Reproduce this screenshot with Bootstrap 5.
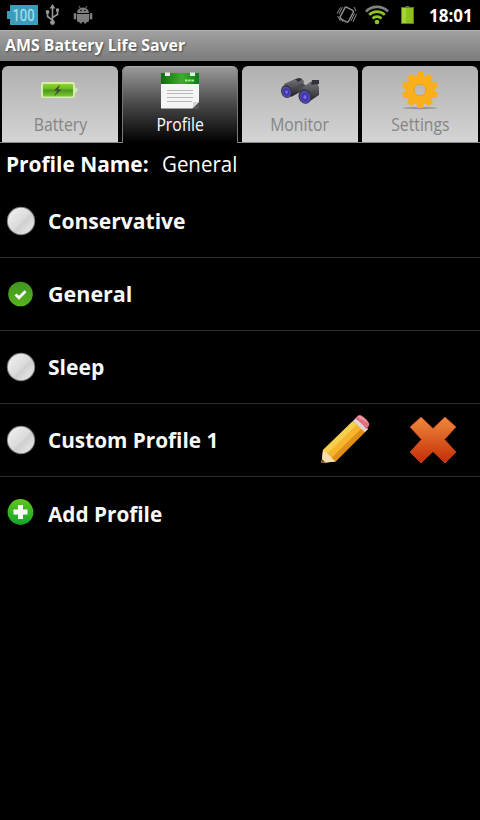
<!DOCTYPE html>
<html lang="en">
<head>
<meta charset="utf-8">
<meta name="viewport" content="width=device-width, initial-scale=1">
<title>AMS Battery Life Saver</title>
<link href="https://cdn.jsdelivr.net/npm/bootstrap@5.3.0/dist/css/bootstrap.min.css" rel="stylesheet">
<style>
body{background:#000;color:#fff;font-family:"Open Sans","Noto Sans",sans-serif;width:480px;height:820px;overflow:hidden}
svg{display:block;flex:none}
.statusbar{height:30px;padding:0 8px 0 7px}
.wifi{margin-left:7px}
.batt{margin-left:12px}
.clock{font-size:17px;font-weight:700;line-height:30px;padding-top:2px;width:43px;margin-left:15px}
.titlebar{height:31px;background:linear-gradient(#a0a0a0,#7c7c7c);border-top:1px solid #b0b0b0;padding-left:5px;font-size:15.9px;font-weight:700;line-height:29px;text-shadow:1px 1px 2px #444}
.fit{display:inline-block;white-space:nowrap;transform-origin:0 50%}
.tabstrip{height:82px;padding:5px 2px 0;gap:4px;background:linear-gradient(#8a8a8a,#8a8a8a) 0 100%/100% 1px no-repeat #000}
.tabstrip .tab{flex:1 1 0;height:76px;border-radius:6px 6px 0 0;background:linear-gradient(#b0b0b0,#d4d4d4);color:#858585;border:0;padding:0}
.tabstrip .tab.current{height:77px;background:linear-gradient(#9c9c9c,#484848 50%,#000);color:#fff;box-shadow:inset 1px 0 #777,inset -1px 0 #777,inset 0 1px #aaa}
.tab svg{margin-top:4px}
.tab-label{font-size:18px;line-height:24px;margin-top:2px}
.tab-label .fit{transform-origin:50% 50%;transform:scaleX(.875)}
.heading{height:42px;padding:0 0 0 6px;font-size:22px;line-height:41px}
.heading-key{width:156px}
.heading-key .fit{transform:scaleX(.95)}
.heading-value .fit{transform:scaleX(.93)}
.profiles .entry{height:73px;border-bottom:1px solid #2b2b2b;padding-left:6px}
.profiles .entry:last-child{border:0}
.entry-name{font-size:21.5px;font-weight:700;margin-left:12px;line-height:72px;color:#f8f8f8}
.tight{transform:scaleX(.965)}
.snug{transform:scaleX(.98)}
.actions{gap:39px;margin-right:23px}
</style>
<script src="https://cdn.jsdelivr.net/npm/bootstrap@5.3.0/dist/js/bootstrap.bundle.min.js"></script>
</head>
<body>
<svg width="0" height="0" class="position-absolute">
  <defs>
    <linearGradient id="orb" x1="0" y1="0" x2="1" y2="1"><stop offset="0" stop-color="#f2f2f2"/><stop offset=".5" stop-color="#dcdcdc"/><stop offset=".58" stop-color="#cfcfcf"/><stop offset="1" stop-color="#efefef"/></linearGradient>
    <linearGradient id="green" x1="0" y1="0" x2="0" y2="1"><stop offset="0" stop-color="#3f9420"/><stop offset="1" stop-color="#58b41c"/></linearGradient>
    <linearGradient id="plusg" x1="0" y1="0" x2="0" y2="1"><stop offset="0" stop-color="#5fc61c"/><stop offset="1" stop-color="#12a52a"/></linearGradient>
    <linearGradient id="red" x1="0" y1="0" x2="0" y2="1"><stop offset="0" stop-color="#f08a3c"/><stop offset="1" stop-color="#c52c06"/></linearGradient>
    <linearGradient id="cell" x1="0" y1="0" x2="0" y2="1"><stop offset="0" stop-color="#8bd23c"/><stop offset=".35" stop-color="#6fbc2c"/><stop offset=".5" stop-color="#4c981a"/><stop offset="1" stop-color="#7cc836"/></linearGradient>
    <linearGradient id="head" x1="0" y1="0" x2="1" y2="0"><stop offset="0" stop-color="#126b12"/><stop offset=".55" stop-color="#3fae2c"/><stop offset="1" stop-color="#0e7a14"/></linearGradient>
    <linearGradient id="barrel" x1="0" y1="0" x2="0" y2="1"><stop offset="0" stop-color="#77777b"/><stop offset=".4" stop-color="#55555a"/><stop offset="1" stop-color="#1c1c20"/></linearGradient>
    <radialGradient id="lens"><stop offset="0" stop-color="#8f86e8"/><stop offset=".5" stop-color="#3d2fa8"/><stop offset="1" stop-color="#5b51bd"/></radialGradient>
    <symbol id="radio" viewBox="0 0 30 30"><circle cx="15" cy="15" r="14.200" fill="#777"/><circle cx="15" cy="15" r="13.200" fill="url(#orb)"/></symbol>
  </defs>
</svg>

<header class="statusbar d-flex align-items-center">
  <svg width="32" height="30"><path d="M3 5h28v20H3v-6H0v-8h3z" fill="#3b9cbb"/><text x="5.500" y="21" font-size="16" textLength="22" lengthAdjust="spacingAndGlyphs" fill="#a9dcec" stroke="#a9dcec" stroke-width=".3" font-family="Roboto,sans-serif">100</text></svg>
  <svg class="ms-1" width="20" height="30" fill="none" stroke="#969696" stroke-width="1.600"><path d="M9.500 7v15M9.500 20 4.500 16.500V12M9.500 17.500 14.500 14.500V10"/><path d="m9.500 4 3 4.500h-6zM13 8.500h3v3h-3z" fill="#969696" stroke="none"/><circle cx="4.500" cy="12" r="1.900" fill="#969696" stroke="none"/><circle cx="9.500" cy="22.500" r="2.400" fill="#969696" stroke="none"/></svg>
  <svg class="ms-2" width="24" height="30"><g fill="#7d7d7d"><path d="M6 13a6 5.500 0 0 1 12 0zM6 14h12v6.500a1.500 1.500 0 0 1-1.500 1.500h-9A1.500 1.500 0 0 1 6 20.500z"/><rect x="2.700" y="13" width="2.600" height="6.500" rx="1.300"/><rect x="18.700" y="13" width="2.600" height="6.500" rx="1.300"/><rect x="8.500" y="20" width="2.600" height="3.500" rx="1"/><rect x="13" y="20" width="2.600" height="3.500" rx="1"/></g><path d="m8 6 1.500 2.500M16 6l-1.500 2.500" stroke="#7d7d7d"/><circle cx="10" cy="10.500" r=".8"/><circle cx="14" cy="10.500" r=".8"/></svg>
  <svg class="ms-auto" width="22" height="30" fill="none" stroke="#8c8c8c"><rect x="6" y="8" width="9.500" height="13" rx="1.500" stroke-width="1.500" transform="rotate(28 10.500 14.500)"/><path d="M4.500 7.500 1 13.500M6.500 7 3 14M1.500 16l3 5M4 16l3 6M20.500 14 17 22M18.500 13.500 15 21M18 7l2 4"/></svg>
  <svg class="wifi" width="24" height="30" fill="none" stroke-width="2.600"><path d="M1 11.500a15.500 15.500 0 0 1 22 0" stroke="#828282"/><path d="M4.200 14.900a11 11 0 0 1 15.600 0M7.500 18.500a6.300 6.300 0 0 1 9 0" stroke="#8fc41e"/><circle cx="12" cy="22" r="2.300" fill="#8fc41e"/></svg>
  <svg width="13" height="30" class="batt"><path d="M4.500 6h4v2h-4z" fill="#666"/><rect x=".5" y="7.500" width="12" height="16" fill="#8cc21a" stroke="#5e7d22"/><path d="M1 8h4v15H1z" fill="#a3d433"/></svg>
  <div class="clock text-end">18:01</div>
</header>

<div class="titlebar">AMS Battery Life Saver</div>

<nav class="tabstrip d-flex align-items-start">
  <button class="tab d-flex flex-column align-items-center">
    <svg width="40" height="40"><path d="M3 12h30q2 0 2 2v3l3.500 3-3.500 3v3q0 2-2 2H3q-2 0-2-2V14q0-2 2-2z" fill="#d4ecae"/><rect x="3" y="14" width="30" height="12.500" rx="1" fill="url(#cell)"/><path d="m20 14.500-6 6h3.500L14 26.500l7.500-7H18z" fill="#3b4a2c"/></svg>
    <div class="tab-label"><span class="fit">Battery</span></div>
  </button>
  <button class="tab current d-flex flex-column align-items-center">
    <svg width="40" height="40"><path d="M1 4h38v34.500H1z" fill="#f5f5f5"/><path d="M1 3h38v11H1z" fill="url(#head)"/><path d="M5 2.500h5v3.500H5zM30 2.500h5v3.500h-5z" fill="#e8eee4"/><path d="M25 10.500h9" stroke="#b5e59a" stroke-width="2" stroke-dasharray="2.500 .7"/><path d="M7 20.500h26M7 23.500h26M7 27.500h26M7 31.500h25" stroke="#b8b8b8"/><path d="M39 32v7h-7z" fill="#555"/><path d="M39 31q-4 2-6 1 1 3-1 6.500z" fill="#d0d0d0"/></svg>
    <div class="tab-label"><span class="fit">Profile</span></div>
  </button>
  <button class="tab d-flex flex-column align-items-center">
    <svg width="42" height="40"><path d="m5 14 11-5 6-1 3 3-2 10-11 6z" fill="url(#barrel)"/><path d="m18 16 5-3 5 3-2 6h-5z" fill="#4b4b50"/><path d="m23 18 8-6 8-1v4l1 2v8l-12 8z" fill="url(#barrel)"/><path d="m16 9 5-1 2 2-4 2zM33 10h7v4l-8 1z" fill="#333238"/><ellipse cx="7.500" cy="21.500" rx="5.300" ry="6.500" transform="rotate(-18 7.500 21.500)" fill="#36353e"/><ellipse cx="7.500" cy="22" rx="4.200" ry="5.400" transform="rotate(-18 7.500 22)" fill="url(#lens)"/><ellipse cx="26" cy="26.500" rx="6.400" ry="7.400" transform="rotate(-18 26 26.500)" fill="#36353e"/><ellipse cx="26" cy="27" rx="5.200" ry="6.200" transform="rotate(-18 26 27)" fill="url(#lens)"/></svg>
    <div class="tab-label"><span class="fit">Monitor</span></div>
  </button>
  <button class="tab d-flex flex-column align-items-center">
    <svg width="40" height="40"><ellipse cx="20" cy="38" rx="17" ry="1.200" fill="#969696"/><g transform="translate(20 20)"><circle r="10" fill="none" stroke="#fab01c" stroke-width="9"/><g fill="#faae1a"><path id="tt" d="M-4-12-2.800-18h5.600L4-12z"/><use href="#tt" transform="rotate(36)"/><use href="#tt" transform="rotate(72)"/><use href="#tt" transform="rotate(108)"/><use href="#tt" transform="rotate(144)"/><use href="#tt" transform="rotate(180)"/><use href="#tt" transform="rotate(216)"/><use href="#tt" transform="rotate(252)"/><use href="#tt" transform="rotate(288)"/><use href="#tt" transform="rotate(324)"/></g><circle r="5.800" fill="none" stroke="#e3a02a" stroke-width=".8"/></g></svg>
    <div class="tab-label"><span class="fit">Settings</span></div>
  </button>
</nav>

<main>
  <div class="heading d-flex"><div class="heading-key fw-bold"><span class="fit">Profile Name:</span></div><div class="heading-value"><span class="fit">General</span></div></div>
  <div class="profiles">
    <div class="entry d-flex align-items-center"><svg width="30" height="30"><use href="#radio"/></svg><span class="entry-name"><span class="fit snug">Conservative</span></span></div>
    <div class="entry d-flex align-items-center"><svg width="30" height="30"><circle cx="14.500" cy="15" r="12.300" fill="url(#green)"/><path d="m9.500 15.500 3.500 3.300 6.500-6.500" fill="none" stroke="#fff" stroke-width="2.700"/></svg><span class="entry-name"><span class="fit">General</span></span></div>
    <div class="entry d-flex align-items-center"><svg width="30" height="30"><use href="#radio"/></svg><span class="entry-name"><span class="fit snug">Sleep</span></span></div>
    <div class="entry d-flex align-items-center"><svg width="30" height="30"><use href="#radio"/></svg><span class="entry-name"><span class="fit tight">Custom Profile 1</span></span>
      <div class="actions d-flex ms-auto">
        <svg width="50" height="50"><path d="m1.500 48 1.500-13L36 3.500 48 14 15.500 46.500z" fill="#f5b52c"/><path d="M3 35 32.500 6.300l4 3.700L7 39z" fill="#f7cf4c"/><path d="M11.500 43 41 14l3.500 3.200-29 29.300z" fill="#e08f1a"/><path d="m1.500 48 1.500-13 4.500 3.500 4 4.300 4 3.700z" fill="#f7dfb0"/><path d="m1.500 48 .5-4 3.500 3.500z" fill="#6b4a20"/><path d="m33 6 3-3 12 11-3 3z" fill="#dcd6d8"/><path d="M35 3.500 37.500 1q2-1.500 4-.5 5 3 7.500 7.500.7 2-.5 3.500L46 14q-4-6-11-10.500z" fill="#e0707c"/><path d="M37.500 2q2-1.500 4-.5 4 2.500 7 7-5.500-4-11-6.500z" fill="#f0a0a8"/></svg>
        <svg width="48" height="50"><path d="M1 12 12 2l12 11.500L36 2l11 10-11.500 12.500L47 37 36 48 24 36.500 12 48 1 37l11.500-12.500z" fill="url(#red)" stroke="#c8471a" stroke-width=".8" stroke-linejoin="round"/></svg>
      </div>
    </div>
    <div class="entry d-flex align-items-center"><svg width="30" height="30"><circle cx="14.500" cy="13" r="12.900" fill="url(#plusg)"/><path d="M14.500 6v14M7.500 13h14" stroke="#fff" stroke-width="5"/></svg><span class="entry-name"><span class="fit tight">Add Profile</span></span></div>
  </div>
</main>
</body>
</html>
